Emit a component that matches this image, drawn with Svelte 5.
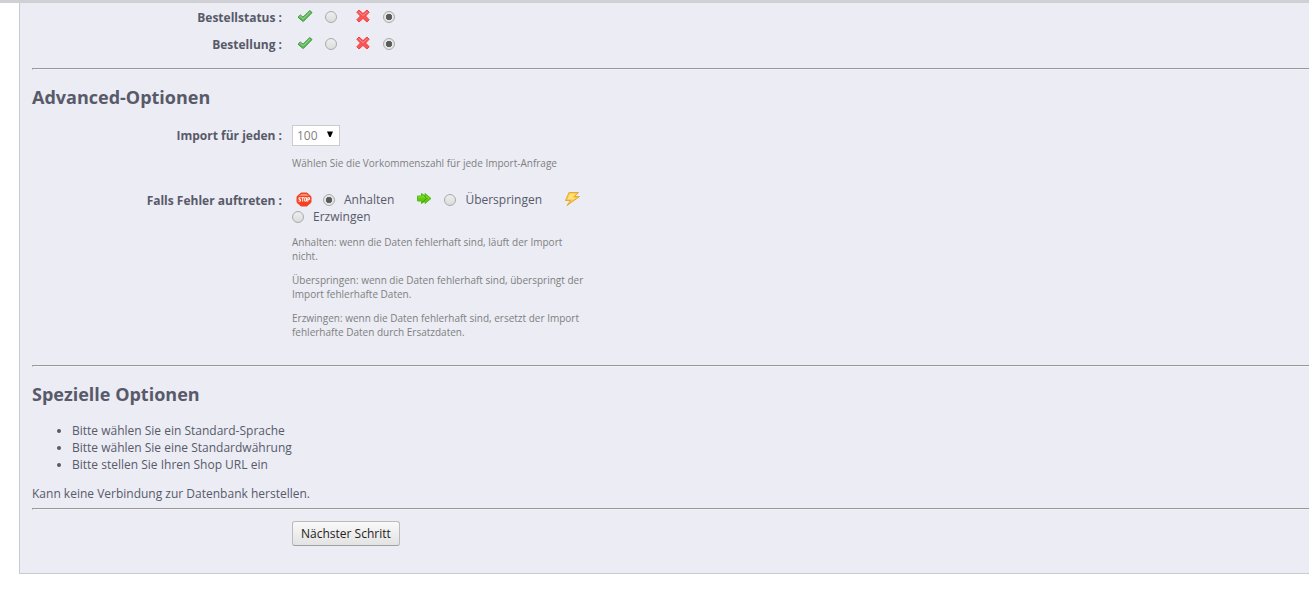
<script lang="ts">
	let toggles = [
		{ id: 'orderstate', label: 'Bestellstatus :', value: '0' },
		{ id: 'order', label: 'Bestellung :', value: '0' }
	];

	let perRequest = '100';
	let onError = 'stop';

	const hints = [
		'Anhalten: wenn die Daten fehlerhaft sind, läuft der Import nicht.',
		'Überspringen: wenn die Daten fehlerhaft sind, überspringt der Import fehlerhafte Daten.',
		'Erzwingen: wenn die Daten fehlerhaft sind, ersetzt der Import fehlerhafte Daten durch Ersatzdaten.'
	];

	const messages = [
		'Bitte wählen Sie ein Standard-Sprache',
		'Bitte wählen Sie eine Standardwährung',
		'Bitte stellen Sie Ihren Shop URL ein'
	];
</script>

<form class="panel" on:submit|preventDefault>
	{#each toggles as toggle}
		<div class="row toggle" role="radiogroup" aria-labelledby={toggle.id}>
			<span class="name" id={toggle.id}>{toggle.label}</span>
			<div class="switch">
				<label>
					<svg width="16" height="16" viewBox="0 0 16 16" role="img" aria-label="Ja">
						<path d="M1 8.2L3.3 6L6 8.2L12.8 1.6L15 3.6L6.2 12.6Z" fill="#5fbb5c" stroke="#3d933c" stroke-linejoin="round" />
						<path d="M2.4 8L3.4 7.2L6.1 9.7L13 2.9" fill="none" stroke="#95d991" />
					</svg>
					<input type="radio" name={toggle.id} value="1" bind:group={toggle.value} />
				</label>
				<label>
					<svg width="16" height="16" viewBox="0 0 16 16" role="img" aria-label="Nein">
						<path d="M4 1L8 4.6L12 1L14.2 3.2L10.6 7L14.2 10.8L12 13L8 9.4L4 13L1.8 10.8L5.4 7L1.8 3.2Z" fill="#fb5555" stroke="#f04444" stroke-linejoin="round" />
						<path d="M3.6 2.8L8 6.6L12.4 2.8" fill="none" stroke="#ff8c8c" />
					</svg>
					<input type="radio" name={toggle.id} value="0" bind:group={toggle.value} />
				</label>
			</div>
		</div>
	{/each}

	<hr />

	<h2>Advanced-Optionen</h2>
	<div class="row">
		<label class="name" for="request">Import für jeden :</label>
		<div class="field">
			<div class="select">
				<select id="request" bind:value={perRequest}>
					<option>100</option>
					<option>200</option>
					<option>500</option>
				</select>
				<svg width="8" height="7" viewBox="0 0 8 7" aria-hidden="true">
					<path d="M1 0.5H7L4.6 6H3.4Z" fill="#000" />
				</svg>
			</div>
			<p class="hint">Wählen Sie die Vorkommenszahl für jede Import-Anfrage</p>
		</div>
	</div>

	<div class="row errors">
		<span class="name" id="errors">Falls Fehler auftreten :</span>
		<div class="field">
			<div class="choices" role="radiogroup" aria-labelledby="errors">
				<svg width="16" height="16" viewBox="0 0 16 16" aria-hidden="true">
					<path d="M5 2H11L15 5.6V11.4L11 15H5L1 11.4V5.6Z" fill="#f6401f" stroke="#ee4a2c" stroke-linejoin="round" />
					<path d="M5.2 3H10.8L13 5H3Z" fill="#fb8c68" />
					<path d="M4.8 6.7H3V8.4H4.5V10.2H2.5M5.4 6.7H8M6.7 6.7V10.6M8.7 6.7H10.5V10.1H8.7ZM11.8 10.7V6.7H13.5V8.6H11.8" fill="none" stroke="#fff" />
				</svg>
				<label class="stop">
					<input type="radio" name="onerror" value="stop" bind:group={onError} />
					Anhalten
				</label>
				<svg width="16" height="16" viewBox="0 0 16 16" aria-hidden="true">
					<path d="M1.5 5H5.5V2.5L9 5V2.5L15 7.5L9 12.5V10L5.5 12.5V10H1.5Z" fill="#5fcc0e" stroke="#55b818" stroke-linejoin="round" />
					<path d="M2 6H6.5V5L9 7M9.8 5L12.8 7.3" fill="none" stroke="#8fe03a" />
					<path d="M6 11.5L10.5 7.5L8.5 5.2" fill="none" stroke="#3f9c0a" />
				</svg>
				<label class="skip">
					<input type="radio" name="onerror" value="skip" bind:group={onError} />
					Überspringen
				</label>
				<svg width="16" height="16" viewBox="0 0 16 16" aria-hidden="true">
					<path d="M5 1.5H14.5L10.5 5.5H15.5L3 14.5L6.5 9.5H1.5Z" fill="#f8c846" stroke="#e3a93c" stroke-linejoin="round" />
					<path d="M5.8 2.8H11.8L8 6.8H11.8L7 10.2L8.5 8.2H3.6Z" fill="#ffe27a" />
				</svg>
				<label>
					<input type="radio" name="onerror" value="force" bind:group={onError} />
					Erzwingen
				</label>
			</div>
			{#each hints as hint}
				<p class="hint">{hint}</p>
			{/each}
		</div>
	</div>

	<hr />

	<h2>Spezielle Optionen</h2>
	<ul>
		{#each messages as message}
			<li>{message}</li>
		{/each}
	</ul>
	<p class="status">Kann keine Verbindung zur Datenbank herstellen.</p>

	<hr />

	<div class="actions">
		<button type="submit">Nächster Schritt</button>
	</div>
</form>

<style>
	:global(body) {
		margin: 0;
		background: #fff;
	}

	:global(#app) {
		border-top: 3px solid #d0d0d4;
	}

	.panel {
		margin-left: 19px;
		padding: 1px 0 27px 12px;
		border-left: 1px solid #c8cad3;
		border-bottom: 1px solid #c8cad3;
		background: #ebecf4;
		color: #585a69;
		font: 12px/17px 'Open Sans', sans-serif;
	}

	svg {
		display: block;
		flex: none;
	}

	hr {
		margin: 0;
		border: 1px solid;
		border-color: #999 transparent #f2f3f7 #999;
		border-right: 0;
	}

	h2 {
		margin: 15px 0 16px;
		font-size: 18px;
		line-height: 24px;
		font-weight: 700;
	}

	.row {
		display: flex;
		align-items: flex-start;
		gap: 10px;
	}

	.name {
		flex: none;
		width: 250px;
		padding-top: 2px;
		text-align: right;
		font-weight: 700;
	}

	.toggle {
		height: 27px;
		align-items: center;
	}

	.toggle .name {
		padding: 0;
	}

	.toggle:nth-of-type(2) {
		margin-bottom: 10px;
	}

	.switch {
		display: flex;
		gap: 18px;
		padding: 0 0 1px 5px;
	}

	.switch label {
		display: flex;
		align-items: center;
		gap: 12px;
	}

	.field {
		width: 300px;
	}

	input {
		appearance: none;
		flex: none;
		width: 12px;
		height: 12px;
		margin: 0;
		border: 1px solid #aaa;
		border-radius: 50%;
		background: linear-gradient(#eee, #dcdcdc);
	}

	input:checked {
		background: radial-gradient(circle, #5a5a5a 0 2px, #666 3px, #e6e6e6 3px);
	}

	.select {
		position: relative;
		width: 48px;
	}

	select {
		appearance: none;
		display: block;
		width: 100%;
		height: 21px;
		padding: 0 4px;
		border: 1px solid #ccc;
		border-radius: 0;
		background: #fff;
		color: #7f7f7f;
		font: inherit;
	}

	.select svg {
		position: absolute;
		top: 6px;
		right: 6px;
		pointer-events: none;
	}

	.hint {
		max-width: 296px;
		margin: 10px 0;
		color: #7f7f7f;
		font-size: 10px;
		line-height: 14px;
	}

	.errors {
		margin: 11px 0 16px;
	}

	.errors .name {
		padding-top: 1px;
	}

	.choices {
		display: flex;
		flex-wrap: wrap;
		align-items: center;
		padding-left: 4px;
	}

	.choices svg {
		margin-bottom: 1px;
	}

	.choices label {
		display: flex;
		align-items: center;
		gap: 9px;
	}

	.choices label:last-child {
		margin-left: -4px;
	}

	.stop {
		margin: 0 22px 0 11px;
	}

	.skip {
		margin: 0 22px 0 12px;
	}

	ul {
		margin: 0 0 12px;
		padding-left: 40px;
	}

	.status {
		margin: 0 0 6px;
	}

	.actions {
		padding: 11px 0 0 260px;
	}

	button {
		display: block;
		height: 25px;
		padding: 0 8px;
		border: 1px solid #bbb;
		border-bottom-color: #a0a0a0;
		border-radius: 3px;
		background: linear-gradient(#f9f9f9, #e3e3e3);
		color: #222;
		font: inherit;
	}
</style>
